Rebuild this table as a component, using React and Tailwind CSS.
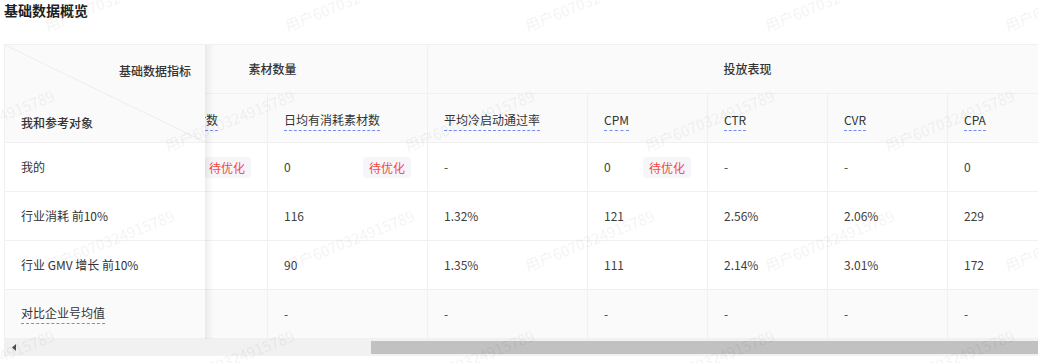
import { useLayoutEffect, useRef } from 'react'

const columns = [
  { key: 'total', title: '累计新增素材数', width: 'w-[150px]' },
  { key: 'daily', title: '日均有消耗素材数', width: 'w-[160px]' },
  { key: 'pass', title: '平均冷启动通过率', width: 'w-[160px]' },
  { key: 'cpm', title: 'CPM', width: 'w-[120px]' },
  { key: 'ctr', title: 'CTR', width: 'w-[120px]' },
  { key: 'cvr', title: 'CVR', width: 'w-[120px]' },
  { key: 'cpa', title: 'CPA', width: 'w-[120px]' },
]

// the first column sits under the fixed column, only its right edge shows
const rows = [
  {
    name: '我的',
    values: { total: '', daily: '0', pass: '-', cpm: '0', ctr: '-', cvr: '-', cpa: '0' },
    tags: ['total', 'daily', 'cpm'],
  },
  {
    name: '行业消耗 前10%',
    values: { total: '', daily: '116', pass: '1.32%', cpm: '121', ctr: '2.56%', cvr: '2.06%', cpa: '229' },
  },
  {
    name: '行业 GMV 增长 前10%',
    values: { total: '', daily: '90', pass: '1.35%', cpm: '111', ctr: '2.14%', cvr: '3.01%', cpa: '172' },
  },
  {
    name: '对比企业号均值',
    summary: true,
    values: { total: '', daily: '-', pass: '-', cpm: '-', ctr: '-', cvr: '-', cpa: '-' },
  },
]

function Tag() {
  return (
    <span className="h-[21px] rounded-[4px] bg-[#f5f6fa] px-[6px] text-[12px] leading-[21px] text-[#f5483b]">
      待优化
    </span>
  )
}

function Watermarks() {
  const marks = []
  for (let r = 0; r < 4; r++) {
    const y = 33 + r * 120
    const startX = r % 2 === 0 ? 48 : -72
    for (let x = startX; x < 1100; x += 240) {
      marks.push({ x, y })
    }
  }
  return (
    <div className="pointer-events-none absolute inset-0 z-30 overflow-hidden">
      {marks.map((m, i) => (
        <span
          key={i}
          className="absolute origin-bottom-left rotate-[-22deg] whitespace-nowrap text-[15px] leading-[15px] text-black/[0.05]"
          style={{ left: m.x, top: m.y - 15 }}
        >
          用户6070324915789
        </span>
      ))}
    </div>
  )
}

export default function App() {
  const scrollRef = useRef(null)

  useLayoutEffect(() => {
    if (scrollRef.current) scrollRef.current.scrollLeft = 87
  }, [])

  return (
    <div className="relative min-h-screen overflow-hidden bg-white pl-1 font-['Noto_Sans_CJK_SC',sans-serif] text-[#333]">
      <h2 className="h-[20px] text-[14px] font-semibold leading-[20px] text-[#1f1f1f]">基础数据概览</h2>

      <div className="mt-[24px] flex border-l border-t border-[#f0f0f0]">
        {/* fixed left column */}
        <div className="relative z-10 w-[200px] shrink-0">
          <div className="relative h-[98px] border-b border-[#f0f0f0] bg-[#fafafa]">
            <svg className="absolute inset-0 h-full w-full" preserveAspectRatio="none" viewBox="0 0 200 97">
              <line x1="0" y1="0" x2="200" y2="97" stroke="#ededed" strokeWidth="1" />
            </svg>
            <div className="relative flex h-[49px] items-center justify-end pr-[14px] pt-[3px] text-[12px] font-medium">
              基础数据指标
            </div>
            <div className="relative flex h-[48px] items-center pl-4 pt-[9px] text-[12px] font-medium">
              我和参考对象
            </div>
          </div>
          {rows.map((row) => (
            <div
              key={row.name}
              className={`flex h-[49px] items-center border-b border-[#f0f0f0] pl-4 text-[12px] ${
                row.summary ? 'bg-[#fafafa]' : 'bg-white'
              }`}
            >
              {row.summary ? (
                <span className="border-b border-dashed border-[#6f8cf0] pb-px leading-[18px]">{row.name}</span>
              ) : (
                row.name
              )}
            </div>
          ))}
          <div className="pointer-events-none absolute bottom-0 right-[-30px] top-0 w-[30px] shadow-[inset_10px_0_8px_-8px_rgba(5,5,5,0.1)]" />
        </div>

        {/* scrolled columns */}
        <div ref={scrollRef} className="min-w-0 flex-1 overflow-x-hidden">
          <div className="w-[950px]">
            <div className="flex h-[49px] bg-[#fafafa] text-[12px] font-medium">
              <div className="flex w-[310px] items-center justify-center border-b border-r border-[#f0f0f0]">素材数量</div>
              <div className="flex w-[640px] items-center justify-center border-b border-r border-[#f0f0f0]">投放表现</div>
            </div>
            <div className="flex h-[49px] bg-[#fafafa] text-[12px]">
              {columns.map((col) => (
                <div
                  key={col.key}
                  className={`${col.width} flex items-center border-b border-r border-[#f0f0f0] px-4 pt-[5px]`}
                >
                  <span className="whitespace-nowrap border-b border-dashed border-[#6f8cf0] pb-px leading-[18px]">
                    {col.title}
                  </span>
                </div>
              ))}
            </div>
            {rows.map((row) => (
              <div
                key={row.name}
                className={`flex h-[49px] text-[12px] text-[#404040] ${row.summary ? 'bg-[#fafafa]' : 'bg-white'}`}
              >
                {columns.map((col) => (
                  <div
                    key={col.key}
                    className={`${col.width} flex items-center justify-between border-b border-r border-[#f0f0f0] px-4`}
                  >
                    <span>{row.values[col.key]}</span>
                    {row.tags && row.tags.includes(col.key) && <Tag />}
                  </div>
                ))}
              </div>
            ))}
          </div>
        </div>
      </div>

      {/* horizontal scrollbar */}
      <div className="flex h-[17px] bg-[#f1f1f1]">
        <div className="flex w-[19px] items-center justify-center">
          <svg width="4" height="7" viewBox="0 0 4 7">
            <polygon points="4,0 4,7 0,3.5" fill="#505050" />
          </svg>
        </div>
        <div className="w-[348px]" />
        <div className="mt-[2px] h-[13px] flex-1 bg-[#c1c1c1]" />
      </div>

      <Watermarks />
    </div>
  )
}
